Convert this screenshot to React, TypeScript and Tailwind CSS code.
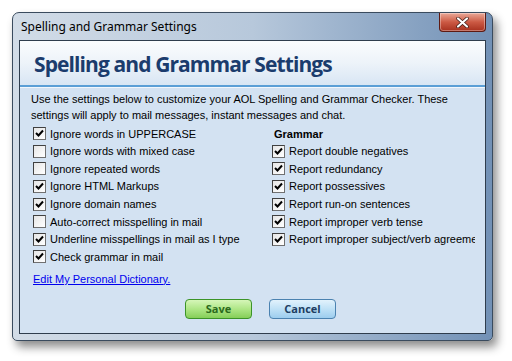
import React from 'react';

const leftItems = [
  { label: 'Ignore words in UPPERCASE', checked: true },
  { label: 'Ignore words with mixed case', checked: false },
  { label: 'Ignore repeated words', checked: false },
  { label: 'Ignore HTML Markups', checked: true },
  { label: 'Ignore domain names', checked: true },
  { label: 'Auto-correct misspelling in mail', checked: false },
  { label: 'Underline misspellings in mail as I type', checked: true },
  { label: 'Check grammar in mail', checked: true },
];

const grammarItems = [
  'Report double negatives',
  'Report redundancy',
  'Report possessives',
  'Report run-on sentences',
  'Report improper verb tense',
  'Report improper subject/verb agreement',
];

const CheckBox = ({ checked }: { checked: boolean }) => (
  <span className="w-[13px] h-[13px] shrink-0 border border-[#707070] border-t-[#404040] border-l-[#404040] bg-gradient-to-br from-[#e6e6e6] to-white flex items-center justify-center">
    {checked && (
      <svg width="9" height="9" viewBox="0 0 9 9">
        <path d="M1 4 L3.5 6.5 L8 1.5" fill="none" stroke="#000" strokeWidth="2" />
      </svg>
    )}
  </span>
);

const Row = ({ label, checked }: { label: string; checked: boolean }) => (
  <div className="h-[17.6px] flex items-center gap-[4px] whitespace-nowrap">
    <CheckBox checked={checked} />
    <span>{label}</span>
  </div>
);

export default function App() {
  return (
    <div className="w-[512px] h-[361px] bg-white pl-[12px] pt-[12px] overflow-hidden">
      <div className="w-[481px] h-[329px] rounded-t-[7px] rounded-b-[5px] border border-[#3a4b5e] bg-gradient-to-r from-[#d2dce7] via-[#b7c8db] to-[#7291b6] shadow-[4px_6px_10px_rgba(0,0,0,0.45)] flex flex-col">
        <div className="h-[27px] flex items-start justify-between pl-[8px] pr-[6px]">
          <span className="mt-[5px] text-[12px] text-black" style={{ fontFamily: '"Noto Sans", sans-serif' }}>
            Spelling and Grammar Settings
          </span>
          <div className="w-[47px] h-[19px] rounded-b-[4px] border border-t-0 border-[#5e1a12] bg-gradient-to-b from-[#e9a898] via-[#cc5a44] to-[#a7301e] flex items-center justify-center shadow-[inset_0_0_0_1px_rgba(255,255,255,0.35)]">
            <svg width="13" height="11" viewBox="0 0 13 11">
              <path d="M2 1.5 L11 9.5 M11 1.5 L2 9.5" stroke="#3b1a14" strokeWidth="3.6" strokeLinecap="round" />
              <path d="M2 1.5 L11 9.5 M11 1.5 L2 9.5" stroke="#fff" strokeWidth="2.2" strokeLinecap="round" />
            </svg>
          </div>
        </div>
        <div className="mx-[6px] h-[294px] border border-[#2f3d4d] bg-[#d3e2f2] flex flex-col" style={{ fontFamily: '"Liberation Sans", Arial, sans-serif' }}>
          <div className="h-[44px] bg-gradient-to-b from-[#fafcfe] via-[#edf3f9] to-[#d8e6f4] flex items-center pl-[14px]">
            <span className="text-[21px] font-bold tracking-[-0.9px] text-[#1b3c6d] pt-[3px]" style={{ fontFamily: '"Open Sans", sans-serif' }}>
              Spelling and Grammar Settings
            </span>
          </div>
          <div className="h-[2px] bg-[#5b9fd6]" />
          <div className="h-[1px] bg-[#f2f7fc]" />
          <div className="flex-1 pl-[11px] pt-[3px] text-[11px] text-black flex flex-col">
            <p className="leading-[16px]">
              Use the settings below to customize your AOL Spelling and Grammar Checker. These
              <br />
              settings will apply to mail messages, instant messages and chat.
            </p>
            <div className="flex mt-[2px]">
              <div className="w-[241px] pl-[2px]">
                {leftItems.map((it) => (
                  <Row key={it.label} label={it.label} checked={it.checked} />
                ))}
              </div>
              <div className="w-[203px] overflow-hidden">
                <div className="h-[17.6px] flex items-center pl-[2px] font-bold">Grammar</div>
                {grammarItems.map((g) => (
                  <Row key={g} label={g} checked />
                ))}
              </div>
            </div>
            <a href="#" className="mt-[6px] ml-[2px] w-fit text-[#0000ee] underline leading-[14px]">
              Edit My Personal Dictionary.
            </a>
            <div className="flex gap-[17px] ml-[154px] mt-[13px]">
              <button className="w-[67px] h-[20px] rounded-[4px] border border-[#3c9428] bg-gradient-to-b from-[#d6f6b8] via-[#aee686] to-[#86cf58] text-[11px] font-bold text-[#2b6a1c]" style={{ fontFamily: '"Open Sans", sans-serif' }}>
                Save
              </button>
              <button className="w-[67px] h-[20px] rounded-[4px] border border-[#4b82b0] bg-gradient-to-b from-[#e2f2fc] via-[#bfe1f6] to-[#9dcdee] text-[11px] font-bold text-[#203e62]" style={{ fontFamily: '"Open Sans", sans-serif' }}>
                Cancel
              </button>
            </div>
          </div>
        </div>
      </div>
    </div>
  );
}
